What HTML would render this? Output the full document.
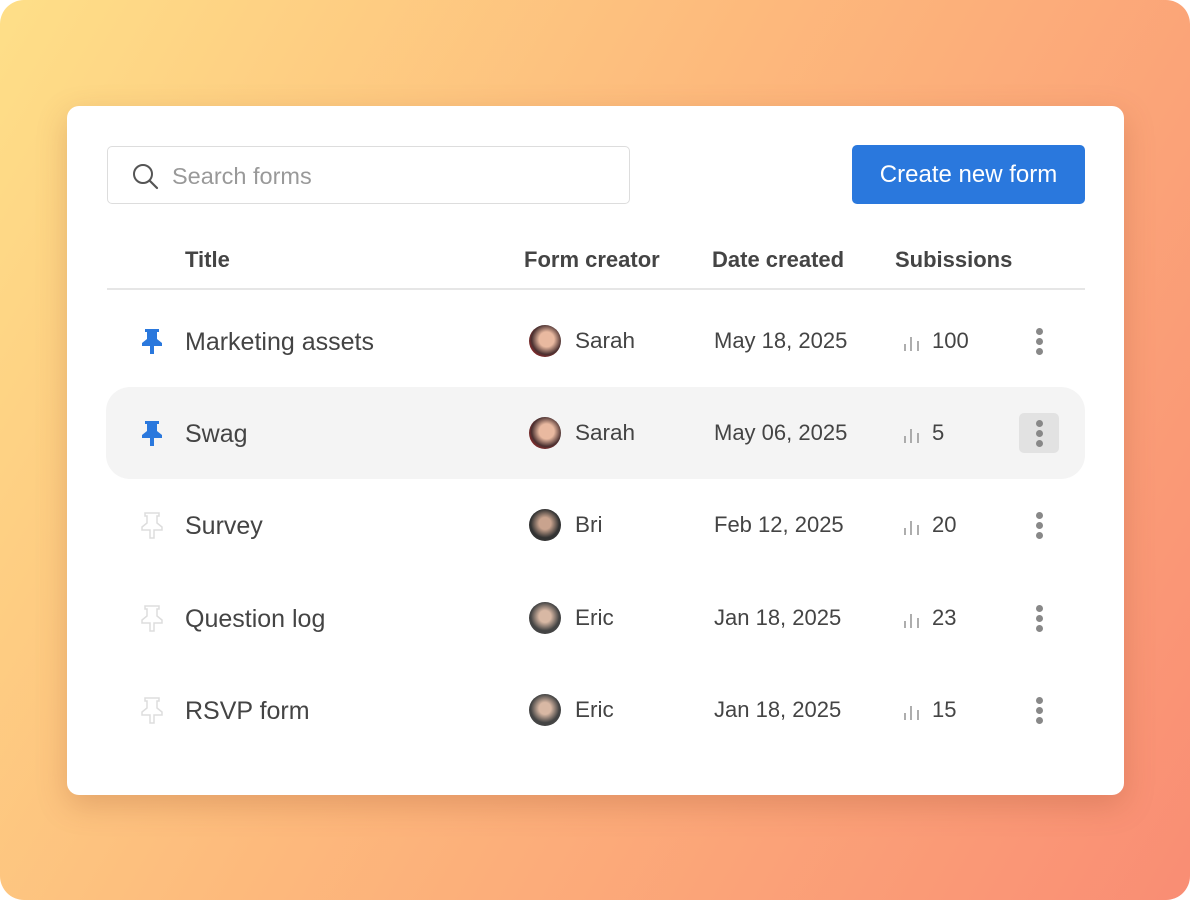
<!DOCTYPE html>
<html><head><style>
*{margin:0;padding:0;box-sizing:border-box}
html,body{background:#fff}
body{width:1190px;height:900px;overflow:hidden;font-family:"Liberation Sans",sans-serif;color:#454545;position:relative}
.bg{position:absolute;inset:0;background:linear-gradient(120deg,#fedf88 0%,#fdb97c 45%,#f98d74 100%);border-radius:24px}
.card{position:absolute;left:67px;top:106px;width:1057px;height:689px;background:#fff;border-radius:12px;box-shadow:0 10px 30px rgba(150,70,40,.25)}
.search{position:absolute;left:40px;top:40px;width:523px;height:58px;border:1.5px solid #ddd;border-radius:5px}
.search span{position:absolute;left:64px;top:16px;font-size:23.5px;color:#999}
.btn{position:absolute;left:785px;top:39px;width:233px;height:59px;background:#2a78dd;border-radius:5px;color:#fff;font-size:24px;text-align:center;line-height:59px}
.h{position:absolute;top:141px;font-size:22px;font-weight:bold;color:#444}
.line{position:absolute;left:40px;top:182px;width:978px;height:1.5px;background:#e6e6e6}
.row{position:absolute;left:39px;width:979px;height:92px}
.row.hl{background:#f4f4f4;border-radius:24px}
.t{position:absolute;top:33px;font-size:25px;color:#444}
.s{top:33px;font-size:22.5px}
.av{position:absolute;left:423px;top:30px;width:32px;height:32px;border-radius:50%}
.pin{position:absolute;left:34px;top:32px}
.bars{position:absolute;left:797px;top:38px}
.dots{position:absolute;left:913px;top:26px;width:40px;height:40px;border-radius:5px}
.dots i{position:absolute;left:17px;width:7px;height:7px;border-radius:50%;background:#888}
</style></head><body>
<div class="bg"></div>
<div class="card">
<div class="search"><svg style="position:absolute;left:24px;top:16px" width="28" height="28" viewBox="0 0 28 28"><circle cx="11" cy="11" r="9" fill="none" stroke="#555" stroke-width="2"/><path d="M18 18l7 7" stroke="#555" stroke-width="2.2" stroke-linecap="round"/></svg><span>Search forms</span></div>
<div class="btn">Create new form</div>
<div class="h" style="left:118px">Title</div>
<div class="h" style="left:457px">Form creator</div>
<div class="h" style="left:645px">Date created</div>
<div class="h" style="left:828px">Subissions</div>
<div class="line"></div>

<div class="row" style="top:189px"><svg class="pin" width="24" height="28" viewBox="0 0 24 28"><path d="M5 2h14v3h-2v7l5 4v3H14v8h-4v-8H2v-3l5-4V5H5z" fill="#2a78dd"/></svg><div class="t" style="left:79px">Marketing assets</div><div class="av" style="background:radial-gradient(circle at 55% 45%,#e9b9a0 30%,#4a3030 60%,#c22 90%)"></div><div class="t s" style="left:469px">Sarah</div><div class="t s" style="left:608px;font-size:22px">May 18, 2025</div><svg class="bars" width="18" height="18"><path d="M2 11v7M8 4v14M15 8v10" stroke="#999" stroke-width="1.6"/></svg><div class="t s" style="left:826px;font-size:22px">100</div><div class="dots"><i style="top:7px"></i><i style="top:17px"></i><i style="top:27px"></i></div></div>

<div class="row hl" style="top:281px"><svg class="pin" width="24" height="28" viewBox="0 0 24 28"><path d="M5 2h14v3h-2v7l5 4v3H14v8h-4v-8H2v-3l5-4V5H5z" fill="#2a78dd"/></svg><div class="t" style="left:79px">Swag</div><div class="av" style="background:radial-gradient(circle at 55% 45%,#e9b9a0 30%,#4a3030 60%,#c22 90%)"></div><div class="t s" style="left:469px">Sarah</div><div class="t s" style="left:608px;font-size:22px">May 06, 2025</div><svg class="bars" width="18" height="18"><path d="M2 11v7M8 4v14M15 8v10" stroke="#999" stroke-width="1.6"/></svg><div class="t s" style="left:826px;font-size:22px">5</div><div class="dots" style="background:#e2e2e2"><i style="top:7px"></i><i style="top:17px"></i><i style="top:27px"></i></div></div>

<div class="row" style="top:373px"><svg class="pin" width="24" height="28" viewBox="0 0 24 28"><path d="M5 2h14v3h-2v7l5 4v3H14v8h-4v-8H2v-3l5-4V5H5z" fill="none" stroke="#ddd" stroke-width="1.5"/></svg><div class="t" style="left:79px">Survey</div><div class="av" style="background:radial-gradient(circle at 50% 45%,#c9a38e 25%,#333 60%)"></div><div class="t s" style="left:469px">Bri</div><div class="t s" style="left:608px;font-size:22px">Feb 12, 2025</div><svg class="bars" width="18" height="18"><path d="M2 11v7M8 4v14M15 8v10" stroke="#999" stroke-width="1.6"/></svg><div class="t s" style="left:826px;font-size:22px">20</div><div class="dots"><i style="top:7px"></i><i style="top:17px"></i><i style="top:27px"></i></div></div>

<div class="row" style="top:466px"><svg class="pin" width="24" height="28" viewBox="0 0 24 28"><path d="M5 2h14v3h-2v7l5 4v3H14v8h-4v-8H2v-3l5-4V5H5z" fill="none" stroke="#ddd" stroke-width="1.5"/></svg><div class="t" style="left:79px">Question log</div><div class="av" style="background:radial-gradient(circle at 50% 45%,#d8b8a4 25%,#444 60%)"></div><div class="t s" style="left:469px">Eric</div><div class="t s" style="left:608px;font-size:22px">Jan 18, 2025</div><svg class="bars" width="18" height="18"><path d="M2 11v7M8 4v14M15 8v10" stroke="#999" stroke-width="1.6"/></svg><div class="t s" style="left:826px;font-size:22px">23</div><div class="dots"><i style="top:7px"></i><i style="top:17px"></i><i style="top:27px"></i></div></div>

<div class="row" style="top:558px"><svg class="pin" width="24" height="28" viewBox="0 0 24 28"><path d="M5 2h14v3h-2v7l5 4v3H14v8h-4v-8H2v-3l5-4V5H5z" fill="none" stroke="#ddd" stroke-width="1.5"/></svg><div class="t" style="left:79px">RSVP form</div><div class="av" style="background:radial-gradient(circle at 50% 45%,#d8b8a4 25%,#444 60%)"></div><div class="t s" style="left:469px">Eric</div><div class="t s" style="left:608px;font-size:22px">Jan 18, 2025</div><svg class="bars" width="18" height="18"><path d="M2 11v7M8 4v14M15 8v10" stroke="#999" stroke-width="1.6"/></svg><div class="t s" style="left:826px;font-size:22px">15</div><div class="dots"><i style="top:7px"></i><i style="top:17px"></i><i style="top:27px"></i></div></div>
</div>
</body></html>
